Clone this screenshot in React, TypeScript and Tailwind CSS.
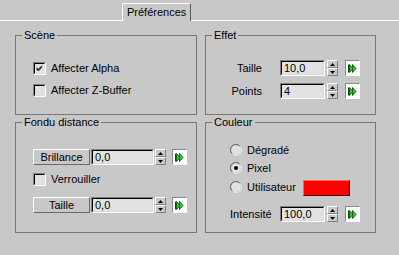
import type { ReactNode } from "react"

function GroupBox({ title, className, children }: { title: string; className: string; children: ReactNode }) {
  return (
    <fieldset className={`border border-[#787878] px-[6px] min-w-0 ${className}`}>
      <legend className="px-[2px] leading-[13px]">{title}</legend>
      {children}
    </fieldset>
  )
}

function Sunken({ className, children }: { className: string; children?: ReactNode }) {
  return (
    <div className={`border-t border-l border-t-[#808080] border-l-[#808080] border-b border-r border-b-white border-r-white ${className}`}>
      <div className="h-full w-full border-t border-l border-t-black border-l-black border-b border-r border-b-[#dcdcdc] border-r-[#dcdcdc] bg-[#e2e2e2] flex items-center">
        {children}
      </div>
    </div>
  )
}

function CheckBox({ checked, label }: { checked?: boolean; label: string }) {
  return (
    <div className="flex items-center h-[13px] gap-[5px]">
      <Sunken className="w-[13px] h-[13px]">
        {checked && (
          <svg width="11" height="11" viewBox="0 0 11 11" className="block">
            <path d="M2 4.5 L4 6.5 L8.5 2 M2 5.5 L4 7.5 L8.5 3 M2 6.5 L4 8.5 L8.5 4" stroke="#000" strokeWidth="1" fill="none" />
          </svg>
        )}
      </Sunken>
      <span>{label}</span>
    </div>
  )
}

function Radio({ checked, label, className = "" }: { checked?: boolean; label: string; className?: string }) {
  return (
    <div className={`flex items-center h-[14px] gap-[5px] ${className}`}>
      <svg width="12" height="12" viewBox="0 0 12 12" className="block">
        <circle cx="6" cy="6" r="5.5" fill="#e2e2e2" stroke="#9a9a9a" />
        <path d="M2 9.5 A5 5 0 0 1 9.5 2" stroke="#6a6a6a" fill="none" />
        <path d="M10 2.5 A5 5 0 0 1 2.5 10" stroke="#f4f4f4" fill="none" />
        {checked && <circle cx="6" cy="6" r="2" fill="#000" />}
      </svg>
      <span>{label}</span>
    </div>
  )
}

function Spinner() {
  return (
    <div className="flex flex-col w-[11px] h-[16px]">
      <div className="flex-1 flex items-center justify-center bg-[#c8c8c8] border-t border-l border-white border-b border-r border-b-[#808080] border-r-[#808080]">
        <svg width="5" height="3" viewBox="0 0 5 3" className="block">
          <path d="M2.5 0 L5 3 L0 3 Z" fill="#000" />
        </svg>
      </div>
      <div className="flex-1 flex items-center justify-center bg-[#c8c8c8] border-t border-l border-white border-b border-r border-b-[#808080] border-r-[#808080]">
        <svg width="5" height="3" viewBox="0 0 5 3" className="block">
          <path d="M0 0 L5 0 L2.5 3 Z" fill="#000" />
        </svg>
      </div>
    </div>
  )
}

function KeyButton({ className }: { className: string }) {
  return (
    <div className={`w-[15px] h-[16px] border-t border-l border-[#8a8a8a] border-b border-r border-b-white border-r-white bg-white flex items-center justify-center ${className}`}>
      <svg width="11" height="11" viewBox="0 0 11 11" className="block">
        <path d="M1.5 1.5 V9.5" stroke="#1a3a1a" />
        <path d="M2.5 1.5 L6 5.5 L2.5 9.5 Z" fill="#22d822" stroke="#0a5a0a" strokeWidth="0.9" />
        <path d="M5.5 1.5 L9 5.5 L5.5 9.5 Z" fill="#22d822" stroke="#0a5a0a" strokeWidth="0.9" />
      </svg>
    </div>
  )
}

function SpinField({ value, width, gap, keyGap }: { value: string; width: string; gap: string; keyGap: string }) {
  return (
    <div className="flex items-center">
      <Sunken className={`${width} h-[16px]`}>
        <span className="pl-[2px] leading-none">{value}</span>
      </Sunken>
      <div className={gap}>
        <Spinner />
      </div>
      <KeyButton className={keyGap} />
    </div>
  )
}

function RaisedButton({ label }: { label: string }) {
  return (
    <div className="w-[57px] h-[16px] flex items-center justify-center bg-[#c8c8c8] border-t border-l border-white border-b border-r border-b-[#6a6a6a] border-r-[#6a6a6a]">
      {label}
    </div>
  )
}

export default function App() {
  return (
    <div
      className="w-[399px] h-[255px] bg-[#c8c8c8] text-black text-[11px] overflow-hidden"
      style={{ fontFamily: '"Liberation Sans", Arial, sans-serif' }}
    >
      <div className="h-[21px] flex items-end border-b border-white">
        <div className="relative ml-[122px] -mb-px w-[69px] h-[18px] bg-[#c8c8c8] border-l border-t border-white border-r border-r-[#5a5a5a] rounded-t-[2px] flex items-center pl-[4px]">
          Préférences
        </div>
      </div>

      <div className="mt-[8px] ml-[15px] grid grid-cols-[182px_171px] gap-x-[8px] gap-y-[1px]">
        <GroupBox title="Scène" className="h-[86px]">
          <div className="pt-[20px] pl-[11px]">
            <CheckBox checked label="Affecter Alpha" />
            <div className="mt-[9px]">
              <CheckBox label="Affecter Z-Buffer" />
            </div>
          </div>
        </GroupBox>

        <GroupBox title="Effet" className="h-[86px]">
          <div className="pt-[18px]">
            <div className="flex items-center h-[16px]">
              <span className="w-[50px] text-right">Taille</span>
              <div className="ml-[18px]">
                <SpinField value="10,0" width="w-[45px]" gap="ml-[2px]" keyGap="ml-[7px]" />
              </div>
            </div>
            <div className="flex items-center h-[16px] mt-[7px]">
              <span className="w-[50px] text-right">Points</span>
              <div className="ml-[18px]">
                <SpinField value="4" width="w-[45px]" gap="ml-[2px]" keyGap="ml-[7px]" />
              </div>
            </div>
          </div>
        </GroupBox>

        <GroupBox title="Fondu distance" className="h-[117px]">
          <div className="pt-[20px] pl-[11px]">
            <div className="flex items-center h-[16px]">
              <RaisedButton label="Brillance" />
              <div className="ml-[1px]">
                <SpinField value="0,0" width="w-[63px]" gap="ml-[1px]" keyGap="ml-[6px]" />
              </div>
            </div>
            <div className="mt-[8px]">
              <CheckBox label="Verrouiller" />
            </div>
            <div className="flex items-center h-[16px] mt-[11px]">
              <RaisedButton label="Taille" />
              <div className="ml-[1px]">
                <SpinField value="0,0" width="w-[63px]" gap="ml-[1px]" keyGap="ml-[6px]" />
              </div>
            </div>
          </div>
        </GroupBox>

        <GroupBox title="Couleur" className="h-[117px]">
          <div className="pt-[14px] pl-[18px]">
            <Radio label="Dégradé" />
            <div className="mt-[4px]">
              <Radio checked label="Pixel" />
            </div>
            <div className="mt-[4px] flex items-center h-[16px]">
              <Radio label="Utilisateur" className="w-[73px] shrink-0" />
              <div className="mt-[2px] w-[47px] h-[16px] bg-[#ff0000] border border-t-[#ff6060] border-l-[#ff6060] border-b-[#400000] border-r-[#400000]" />
            </div>
            <div className="mt-[11px] flex items-center h-[16px]">
              <span className="w-[50px]">Intensité</span>
              <SpinField value="100,0" width="w-[45px]" gap="ml-[2px]" keyGap="ml-[7px]" />
            </div>
          </div>
        </GroupBox>
      </div>
    </div>
  )
}
